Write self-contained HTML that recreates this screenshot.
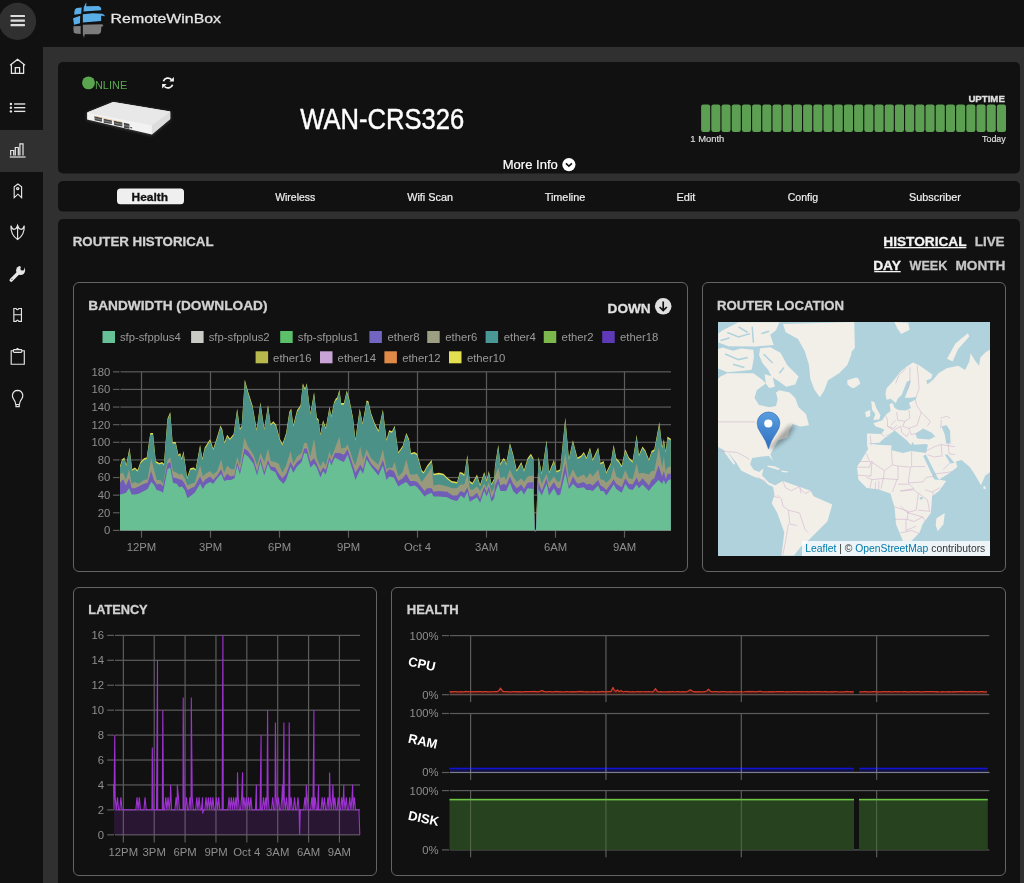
<!DOCTYPE html>
<html><head><meta charset="utf-8"><title>RemoteWinBox</title>
<style>html,body{margin:0;padding:0;background:#2f3030;width:1024px;height:883px;overflow:hidden;font-family:"Liberation Sans",sans-serif}svg{display:block;will-change:transform}</style>
</head><body>
<svg width="1024" height="883" viewBox="0 0 1024 883" font-family="'Liberation Sans', sans-serif"><rect x="0" y="0" width="1024" height="883" fill="#303030"/>
<rect x="0" y="0" width="1024" height="47" fill="#111111"/>
<rect x="0" y="47" width="43" height="836" fill="#111111"/>
<rect x="0" y="130" width="43" height="42" fill="#303030"/>
<circle cx="17.5" cy="21.4" r="18.6" fill="#303030"/>
<rect x="10.5" y="15" width="14.5" height="2.1" rx="0.6" fill="#dcdcdc"/>
<rect x="10.5" y="19.6" width="14.5" height="2.1" rx="0.6" fill="#dcdcdc"/>
<rect x="10.5" y="24.1" width="14.5" height="2.1" rx="0.6" fill="#dcdcdc"/>
<polygon points="74.28,14.74 74.4,11.5 75.2,9.3 76.6,8.1 81.65,7.61 81.17,13.79" fill="#5aaee8"/>
<polygon points="83.55,11.41 83.79,7.13 85.69,3.33 86.4,2.62 86.17,6.18 98.53,5.94 100.4,6.9 101.15,8.56 101.15,10.22" fill="#5aaee8"/>
<polygon points="73.09,18.31 80.22,15.69 79.99,23.3 74.04,24.73" fill="#5aaee8"/>
<polygon points="82.84,14.27 92.82,13.31 102.33,13.79 104.71,15.22 104.24,16.41 102.81,15.69 101.15,15.69 101.15,20.92 82.84,22.59" fill="#5aaee8"/>
<polygon points="73.33,26.15 80.7,25.92 80.7,34 75.23,33.52 73.8,32.3 73.57,30.91" fill="#7c7c7c"/>
<polygon points="82.84,24.73 102.33,24.25 103.52,25.92 101.39,26.63 100.91,32.33 99.8,33.6 98.53,34.24 84.74,34.24 84.03,38.04 82.84,34.24" fill="#7c7c7c"/>
<text transform="translate(110.58,22.80) scale(1.2247,1)" font-size="13" font-weight="normal" fill="#e6e6e6" stroke="#e6e6e6" stroke-width="0.25" >RemoteWinBox</text>
<g fill="none" stroke="#e6e6e6" stroke-width="1.25"><path d="M10.1 65.2 L17.58 59.2 L25 65.2 M11.4 64.2 V73.4 H23.6 V64.2 M15.3 73.4 V67.6 H19.6 V73.4"/></g>
<g fill="#e6e6e6"><circle cx="10.9" cy="104.0" r="1.2"/><circle cx="10.9" cy="107.7" r="1.2"/><circle cx="10.9" cy="111.4" r="1.2"/><rect x="14.1" y="103.3" width="11.2" height="1.35"/><rect x="14.1" y="107.0" width="11.2" height="1.35"/><rect x="14.1" y="110.7" width="11.2" height="1.35"/></g>
<g fill="none" stroke="#e6e6e6" stroke-width="1.2"><path d="M10.7 155.5 V150.5 H13.7 V155.5 M15.3 155.5 V147.5 H18.3 V155.5 M19.9 155.5 V143.8 H23 V155.5"/><path d="M9.8 157 H25.6"/></g>
<g fill="none" stroke="#e6e6e6" stroke-width="1.15"><path d="M14.2 197.6 V186.8 L17.9 184 L21.6 186.8 V197.6 L17.9 194.2 Z"/><ellipse cx="17.7" cy="188.6" rx="1.2" ry="1.0"/></g>
<g fill="none" stroke="#e6e6e6" stroke-width="1.15"><path d="M10.9 225.8 Q12.3 229.6 14.2 229.3 Q16.6 228.9 17.6 225.5 Q18.6 228.9 21 229.3 Q22.9 229.6 24.3 225.8 Q24.6 235 17.6 239.6 Q10.6 235 10.9 225.8 Z M17.6 225.5 V239.6"/></g>
<g><circle cx="20.6" cy="270.5" r="4.5" fill="#e6e6e6"/><line x1="20" y1="271.2" x2="11.2" y2="280.1" stroke="#e6e6e6" stroke-width="3.4" stroke-linecap="round"/><circle cx="22.3" cy="268.7" r="1.9" fill="#111111"/><rect x="21.4" y="263.6" width="3.6" height="5" fill="#111111" transform="rotate(45 23.2 266.1)"/><circle cx="11.9" cy="279.4" r="0.55" fill="#555"/></g>
<g fill="none" stroke="#e6e6e6" stroke-width="1.15"><path d="M13.85 308.5 H16.1 Q17.46 311 18.8 308.5 H21.45 V321.4 H18.8 Q17.46 318.9 16.1 321.4 H13.85 Z M13.85 314.7 H21.45"/></g>
<g fill="none" stroke="#e6e6e6" stroke-width="1.15"><path d="M13.3 350.7 H11.2 V364.2 H24.3 V350.7 H21.8"/><rect x="13.4" y="349.6" width="8.4" height="2.7" rx="0.9"/><path d="M16.3 349.5 L17.55 348.4 L18.8 349.5"/></g>
<g fill="none" stroke="#e6e6e6" stroke-width="1.2"><path d="M15.8 404.5 Q15.6 401.5 13.5 398.8 Q12 396.5 12.5 394.5 Q13.5 390.5 17.6 390.3 Q21.7 390.5 22.7 394.5 Q23.2 396.5 21.7 398.8 Q19.6 401.5 19.4 404.5 Z M16 404.5 V406.6 H19.2 V404.5"/></g>
<rect x="58" y="62" width="962" height="111.5" rx="5" fill="#111111"/>
<circle cx="88.5" cy="82.9" r="6.45" fill="#5aa64f"/>
<text transform="translate(94.97,89.00) scale(1.0333,1)" font-size="10.6" font-weight="normal" fill="#5aa64f" stroke="#5aa64f" stroke-width="0.0" >NLINE</text>
<g fill="none" stroke="#f6f6f6" stroke-width="1.75"><path d="M163.4 81.3 A4.9 4.9 0 0 1 171.46 79.54"/><path d="M172.6 84.7 A4.9 4.9 0 0 1 164.5 86.5"/></g>
<polygon points="173.9,77.1 173.9,81.6 169.3,81.6" fill="#f6f6f6"/><polygon points="162.1,84.0 162.1,88.6 166.6,84.0" fill="#f6f6f6"/>
<g>
<polygon points="86.6,112.3 113.2,101.6 170.6,111.2 170.6,119.4 151.8,135 86.6,119.8" fill="#ffffff" opacity="0.18" transform="translate(0,0.5)" filter="url(#glow)"/>
<polygon points="87.1,112.5 113.2,102 170.2,111.6 170.2,119 151.8,134.6 87.1,119.4" fill="#f2f2f2"/>
<polygon points="87.1,112.5 113.2,102 170.2,111.6 151.8,125.4" fill="#e8e8e8"/>
<polygon points="151.8,125.4 170.2,111.6 170.2,119 151.8,134.6" fill="#dcdcdc"/>
<g fill="#454545">
<polygon points="94.4,116.2 102,118.1 102,121.7 94.7,120.3"/>
<polygon points="103.7,118.7 111.9,120.6 111.9,124.1 103.7,122.8"/>
<polygon points="113.8,120.8 122.3,122.5 122.3,126.6 114.1,125"/>
<polygon points="123.9,122.8 129.4,124.1 129.4,128.8 123.9,127.7"/>
<polygon points="130.2,126.9 132.1,127.3 132.1,128.5 130.2,128.1"/>
</g>
<g stroke="#cfcfcf" stroke-width="0.45" fill="none">
<path d="M94.5 118.3 L102 119.9 M103.7 120.8 L111.9 122.4 M114 122.9 L122.3 124.6 M123.9 125.3 L129.4 126.5"/>
</g>
<g fill="#e8b060" opacity="0.8">
<polygon points="94.2,115.7 122.5,121.9 122.5,122.5 94.2,116.3"/>
</g>
</g>
<text transform="translate(300.20,129.30) scale(0.8827,1)" font-size="29" font-weight="normal" fill="#ffffff" stroke="#ffffff" stroke-width="0.45" >WAN-CRS326</text>
<text transform="translate(502.70,169.00) scale(1.0037,1)" font-size="13" font-weight="normal" fill="#ffffff" stroke="#ffffff" stroke-width="0.2" >More Info</text>
<circle cx="568.9" cy="164.6" r="6.6" fill="#ffffff"/><path d="M565.9 163.3 L568.9 166.2 L571.9 163.3" fill="none" stroke="#111" stroke-width="1.6"/>
<text transform="translate(968.40,101.70) scale(1.0167,1)" font-size="9.5" font-weight="bold" fill="#e0e0e0" stroke="#e0e0e0" stroke-width="0.3" >UPTIME</text>
<rect x="701.10" y="104.4" width="9.1" height="27.6" rx="2.2" fill="#5c9e52"/>
<rect x="711.30" y="104.4" width="9.1" height="27.6" rx="2.2" fill="#5c9e52"/>
<rect x="721.50" y="104.4" width="9.1" height="27.6" rx="2.2" fill="#5c9e52"/>
<rect x="731.70" y="104.4" width="9.1" height="27.6" rx="2.2" fill="#5c9e52"/>
<rect x="741.90" y="104.4" width="9.1" height="27.6" rx="2.2" fill="#5c9e52"/>
<rect x="752.10" y="104.4" width="9.1" height="27.6" rx="2.2" fill="#5c9e52"/>
<rect x="762.30" y="104.4" width="9.1" height="27.6" rx="2.2" fill="#5c9e52"/>
<rect x="772.50" y="104.4" width="9.1" height="27.6" rx="2.2" fill="#5c9e52"/>
<rect x="782.70" y="104.4" width="9.1" height="27.6" rx="2.2" fill="#5c9e52"/>
<rect x="792.90" y="104.4" width="9.1" height="27.6" rx="2.2" fill="#5c9e52"/>
<rect x="803.10" y="104.4" width="9.1" height="27.6" rx="2.2" fill="#5c9e52"/>
<rect x="813.30" y="104.4" width="9.1" height="27.6" rx="2.2" fill="#5c9e52"/>
<rect x="823.50" y="104.4" width="9.1" height="27.6" rx="2.2" fill="#5c9e52"/>
<rect x="833.70" y="104.4" width="9.1" height="27.6" rx="2.2" fill="#5c9e52"/>
<rect x="843.90" y="104.4" width="9.1" height="27.6" rx="2.2" fill="#5c9e52"/>
<rect x="854.10" y="104.4" width="9.1" height="27.6" rx="2.2" fill="#5c9e52"/>
<rect x="864.30" y="104.4" width="9.1" height="27.6" rx="2.2" fill="#5c9e52"/>
<rect x="874.50" y="104.4" width="9.1" height="27.6" rx="2.2" fill="#5c9e52"/>
<rect x="884.70" y="104.4" width="9.1" height="27.6" rx="2.2" fill="#5c9e52"/>
<rect x="894.90" y="104.4" width="9.1" height="27.6" rx="2.2" fill="#5c9e52"/>
<rect x="905.10" y="104.4" width="9.1" height="27.6" rx="2.2" fill="#5c9e52"/>
<rect x="915.30" y="104.4" width="9.1" height="27.6" rx="2.2" fill="#5c9e52"/>
<rect x="925.50" y="104.4" width="9.1" height="27.6" rx="2.2" fill="#5c9e52"/>
<rect x="935.70" y="104.4" width="9.1" height="27.6" rx="2.2" fill="#5c9e52"/>
<rect x="945.90" y="104.4" width="9.1" height="27.6" rx="2.2" fill="#5c9e52"/>
<rect x="956.10" y="104.4" width="9.1" height="27.6" rx="2.2" fill="#5c9e52"/>
<rect x="966.30" y="104.4" width="9.1" height="27.6" rx="2.2" fill="#5c9e52"/>
<rect x="976.50" y="104.4" width="9.1" height="27.6" rx="2.2" fill="#5c9e52"/>
<rect x="986.70" y="104.4" width="9.1" height="27.6" rx="2.2" fill="#5c9e52"/>
<rect x="996.90" y="104.4" width="9.1" height="27.6" rx="2.2" fill="#5c9e52"/>
<text transform="translate(690.31,142.20) scale(0.9909,1)" font-size="9.5" font-weight="normal" fill="#dddddd" stroke="#dddddd" stroke-width="0.2" >1 Month</text>
<text transform="translate(982.00,142.20) scale(0.9400,1)" font-size="9.5" font-weight="normal" fill="#dddddd" stroke="#dddddd" stroke-width="0.2" >Today</text>
<rect x="58" y="181" width="962" height="30.6" rx="5" fill="#111111"/>
<rect x="117" y="188.5" width="67" height="15.8" rx="3.5" fill="#efefef"/>
<text transform="translate(131.56,200.70) scale(1.0412,1)" font-size="11.5" font-weight="bold" fill="#111111" stroke="#111111" stroke-width="0.3" >Health</text>
<text transform="translate(275.20,200.70) scale(0.9091,1)" font-size="11.5" font-weight="normal" fill="#f0f0f0" stroke="#f0f0f0" stroke-width="0.2" >Wireless</text>
<text transform="translate(407.20,200.70) scale(0.9438,1)" font-size="11.5" font-weight="normal" fill="#f0f0f0" stroke="#f0f0f0" stroke-width="0.2" >Wifi Scan</text>
<text transform="translate(544.70,200.70) scale(0.9442,1)" font-size="11.5" font-weight="normal" fill="#f0f0f0" stroke="#f0f0f0" stroke-width="0.2" >Timeline</text>
<text transform="translate(676.55,200.70) scale(0.9526,1)" font-size="11.5" font-weight="normal" fill="#f0f0f0" stroke="#f0f0f0" stroke-width="0.2" >Edit</text>
<text transform="translate(787.75,200.70) scale(0.9167,1)" font-size="11.5" font-weight="normal" fill="#f0f0f0" stroke="#f0f0f0" stroke-width="0.2" >Config</text>
<text transform="translate(909.06,200.70) scale(0.9444,1)" font-size="11.5" font-weight="normal" fill="#f0f0f0" stroke="#f0f0f0" stroke-width="0.2" >Subscriber</text>
<rect x="58" y="219" width="962" height="700" rx="5" fill="#111111"/>
<text transform="translate(72.71,245.70) scale(0.9866,1)" font-size="13.5" font-weight="bold" fill="#d2d2d2" stroke="#d2d2d2" stroke-width="0.3" >ROUTER HISTORICAL</text>
<text transform="translate(883.29,245.50) scale(1.0123,1)" font-size="13.5" font-weight="bold" fill="#f4f4f4" stroke="#f4f4f4" stroke-width="0.3" >HISTORICAL</text>
<text transform="translate(974.70,245.50) scale(0.9966,1)" font-size="13.5" font-weight="bold" fill="#c8c8c8" stroke="#c8c8c8" stroke-width="0.3" >LIVE</text>
<text transform="translate(873.18,269.90) scale(1.0192,1)" font-size="13.5" font-weight="bold" fill="#f4f4f4" stroke="#f4f4f4" stroke-width="0.3" >DAY</text>
<text transform="translate(909.60,269.90) scale(0.9300,1)" font-size="13.5" font-weight="bold" fill="#c8c8c8" stroke="#c8c8c8" stroke-width="0.3" >WEEK</text>
<text transform="translate(955.49,269.90) scale(1.0104,1)" font-size="13.5" font-weight="bold" fill="#c8c8c8" stroke="#c8c8c8" stroke-width="0.3" >MONTH</text>
<rect x="884.3" y="247" width="82" height="1.3" fill="#f4f4f4"/>
<rect x="874.2" y="271" width="26.5" height="1.3" fill="#f4f4f4"/>
<rect x="73.5" y="282.5" width="614" height="289" rx="5.5" fill="none" stroke="#646464" stroke-width="1"/>
<rect x="702.5" y="282.5" width="303" height="289" rx="5.5" fill="none" stroke="#646464" stroke-width="1"/>
<rect x="73.5" y="587.5" width="303" height="288" rx="5.5" fill="none" stroke="#646464" stroke-width="1"/>
<rect x="391.5" y="587.5" width="614" height="288" rx="5.5" fill="none" stroke="#646464" stroke-width="1"/>
<text transform="translate(88.29,310.00) scale(1.0131,1)" font-size="13.5" font-weight="bold" fill="#d2d2d2" stroke="#d2d2d2" stroke-width="0.3" >BANDWIDTH (DOWNLOAD)</text>
<text transform="translate(607.59,312.70) scale(1.0098,1)" font-size="13.5" font-weight="bold" fill="#e0e0e0" stroke="#e0e0e0" stroke-width="0.3" >DOWN</text>
<text transform="translate(717.02,309.60) scale(0.9767,1)" font-size="13.5" font-weight="bold" fill="#d2d2d2" stroke="#d2d2d2" stroke-width="0.3" >ROUTER LOCATION</text>
<text transform="translate(88.35,614.30) scale(0.9452,1)" font-size="13.5" font-weight="bold" fill="#d2d2d2" stroke="#d2d2d2" stroke-width="0.3" >LATENCY</text>
<text transform="translate(406.73,614.30) scale(0.9673,1)" font-size="13.5" font-weight="bold" fill="#d2d2d2" stroke="#d2d2d2" stroke-width="0.3" >HEALTH</text>
<circle cx="663.2" cy="306.3" r="8.3" fill="#e0e0e0"/><path d="M663.2 301.5 V310.5 M659.6 307 L663.2 310.6 L666.8 307" fill="none" stroke="#111" stroke-width="1.7"/>
<rect x="102.5" y="331" width="12.5" height="12" fill="#66c296"/>
<text x="119.9" y="341.3" font-size="11.3" fill="#9a9a9a" text-anchor="start" font-weight="normal" >sfp-sfpplus4</text>
<rect x="191.1" y="331" width="12.5" height="12" fill="#c9cbc4"/>
<text x="208.7" y="341.3" font-size="11.3" fill="#9a9a9a" text-anchor="start" font-weight="normal" >sfp-sfpplus2</text>
<rect x="280.2" y="331" width="12.5" height="12" fill="#5cbf6a"/>
<text x="297.8" y="341.3" font-size="11.3" fill="#9a9a9a" text-anchor="start" font-weight="normal" >sfp-sfpplus1</text>
<rect x="369.4" y="331" width="12.5" height="12" fill="#7265c1"/>
<text x="387.5" y="341.3" font-size="11.3" fill="#9a9a9a" text-anchor="start" font-weight="normal" >ether8</text>
<rect x="427.2" y="331" width="12.5" height="12" fill="#9d9f82"/>
<text x="445.3" y="341.3" font-size="11.3" fill="#9a9a9a" text-anchor="start" font-weight="normal" >ether6</text>
<rect x="485.6" y="331" width="12.5" height="12" fill="#4a9895"/>
<text x="503.75" y="341.3" font-size="11.3" fill="#9a9a9a" text-anchor="start" font-weight="normal" >ether4</text>
<rect x="543.75" y="331" width="12.5" height="12" fill="#7cb84c"/>
<text x="561.6" y="341.3" font-size="11.3" fill="#9a9a9a" text-anchor="start" font-weight="normal" >ether2</text>
<rect x="602.2" y="331" width="12.5" height="12" fill="#5e3ab8"/>
<text x="620" y="341.3" font-size="11.3" fill="#9a9a9a" text-anchor="start" font-weight="normal" >ether18</text>
<rect x="255.6" y="351.3" width="12.5" height="12" fill="#b8b94c"/>
<text x="273.1" y="361.6" font-size="11.3" fill="#9a9a9a" text-anchor="start" font-weight="normal" >ether16</text>
<rect x="320" y="351.3" width="12.5" height="12" fill="#c9a3d6"/>
<text x="337.6" y="361.6" font-size="11.3" fill="#9a9a9a" text-anchor="start" font-weight="normal" >ether14</text>
<rect x="384.4" y="351.3" width="12.5" height="12" fill="#e08a48"/>
<text x="402.2" y="361.6" font-size="11.3" fill="#9a9a9a" text-anchor="start" font-weight="normal" >ether12</text>
<rect x="449" y="351.3" width="12.5" height="12" fill="#e2e050"/>
<text x="466.9" y="361.6" font-size="11.3" fill="#9a9a9a" text-anchor="start" font-weight="normal" >ether10</text>
<rect x="113" y="529.80" width="6.5" height="1.2" fill="#5c5c5c"/>
<rect x="120.5" y="529.80" width="550.5" height="1.2" fill="#5c5c5c"/>
<text x="110.3" y="534.3" font-size="11.3" fill="#8e8e8e" text-anchor="end" font-weight="normal" >0</text>
<rect x="113" y="512.18" width="6.5" height="1.2" fill="#5c5c5c"/>
<rect x="120.5" y="512.18" width="550.5" height="1.2" fill="#5c5c5c"/>
<text x="110.3" y="516.68" font-size="11.3" fill="#8e8e8e" text-anchor="end" font-weight="normal" >20</text>
<rect x="113" y="494.56" width="6.5" height="1.2" fill="#5c5c5c"/>
<rect x="120.5" y="494.56" width="550.5" height="1.2" fill="#5c5c5c"/>
<text x="110.3" y="499.05999999999995" font-size="11.3" fill="#8e8e8e" text-anchor="end" font-weight="normal" >40</text>
<rect x="113" y="476.94" width="6.5" height="1.2" fill="#5c5c5c"/>
<rect x="120.5" y="476.94" width="550.5" height="1.2" fill="#5c5c5c"/>
<text x="110.3" y="481.43999999999994" font-size="11.3" fill="#8e8e8e" text-anchor="end" font-weight="normal" >60</text>
<rect x="113" y="459.32" width="6.5" height="1.2" fill="#5c5c5c"/>
<rect x="120.5" y="459.32" width="550.5" height="1.2" fill="#5c5c5c"/>
<text x="110.3" y="463.81999999999994" font-size="11.3" fill="#8e8e8e" text-anchor="end" font-weight="normal" >80</text>
<rect x="113" y="441.70" width="6.5" height="1.2" fill="#5c5c5c"/>
<rect x="120.5" y="441.70" width="550.5" height="1.2" fill="#5c5c5c"/>
<text x="110.3" y="446.19999999999993" font-size="11.3" fill="#8e8e8e" text-anchor="end" font-weight="normal" >100</text>
<rect x="113" y="424.08" width="6.5" height="1.2" fill="#5c5c5c"/>
<rect x="120.5" y="424.08" width="550.5" height="1.2" fill="#5c5c5c"/>
<text x="110.3" y="428.5799999999999" font-size="11.3" fill="#8e8e8e" text-anchor="end" font-weight="normal" >120</text>
<rect x="113" y="406.46" width="6.5" height="1.2" fill="#5c5c5c"/>
<rect x="120.5" y="406.46" width="550.5" height="1.2" fill="#5c5c5c"/>
<text x="110.3" y="410.9599999999999" font-size="11.3" fill="#8e8e8e" text-anchor="end" font-weight="normal" >140</text>
<rect x="113" y="388.84" width="6.5" height="1.2" fill="#5c5c5c"/>
<rect x="120.5" y="388.84" width="550.5" height="1.2" fill="#5c5c5c"/>
<text x="110.3" y="393.3399999999999" font-size="11.3" fill="#8e8e8e" text-anchor="end" font-weight="normal" >160</text>
<rect x="113" y="371.22" width="6.5" height="1.2" fill="#5c5c5c"/>
<rect x="120.5" y="371.22" width="550.5" height="1.2" fill="#5c5c5c"/>
<text x="110.3" y="375.7199999999999" font-size="11.3" fill="#8e8e8e" text-anchor="end" font-weight="normal" >180</text>
<rect x="140.90" y="371.7" width="1.2" height="166" fill="#5c5c5c"/>
<text x="141.5" y="550.8" font-size="11.3" fill="#8e8e8e" text-anchor="middle" font-weight="normal" >12PM</text>
<rect x="209.90" y="371.7" width="1.2" height="166" fill="#5c5c5c"/>
<text x="210.5" y="550.8" font-size="11.3" fill="#8e8e8e" text-anchor="middle" font-weight="normal" >3PM</text>
<rect x="278.90" y="371.7" width="1.2" height="166" fill="#5c5c5c"/>
<text x="279.5" y="550.8" font-size="11.3" fill="#8e8e8e" text-anchor="middle" font-weight="normal" >6PM</text>
<rect x="347.90" y="371.7" width="1.2" height="166" fill="#5c5c5c"/>
<text x="348.5" y="550.8" font-size="11.3" fill="#8e8e8e" text-anchor="middle" font-weight="normal" >9PM</text>
<rect x="416.90" y="371.7" width="1.2" height="166" fill="#5c5c5c"/>
<text x="417.5" y="550.8" font-size="11.3" fill="#8e8e8e" text-anchor="middle" font-weight="normal" >Oct 4</text>
<rect x="485.90" y="371.7" width="1.2" height="166" fill="#5c5c5c"/>
<text x="486.5" y="550.8" font-size="11.3" fill="#8e8e8e" text-anchor="middle" font-weight="normal" >3AM</text>
<rect x="554.90" y="371.7" width="1.2" height="166" fill="#5c5c5c"/>
<text x="555.5" y="550.8" font-size="11.3" fill="#8e8e8e" text-anchor="middle" font-weight="normal" >6AM</text>
<rect x="623.90" y="371.7" width="1.2" height="166" fill="#5c5c5c"/>
<text x="624.5" y="550.8" font-size="11.3" fill="#8e8e8e" text-anchor="middle" font-weight="normal" >9AM</text>
<path d="M120.0 530.3 L120.0 465.6 L120.1 465.6 L122.2 459.2 L124.4 457.4 L126.2 464.7 L129.5 447.5 L132.2 469.2 L134.9 467.4 L137.6 470.1 L140.4 462.0 L144.0 458.3 L146.7 457.4 L150.3 433.0 L153.0 433.0 L155.8 461.1 L159.4 462.9 L162.1 462.0 L163.9 463.8 L167.5 418.5 L170.3 412.1 L172.6 442.0 L175.7 442.0 L178.4 454.7 L180.2 452.9 L181.7 458.3 L183.5 451.1 L187.1 477.4 L190.2 468.3 L193.8 467.4 L195.6 469.2 L200.1 444.7 L202.3 458.3 L204.7 447.5 L210.0 439.3 L213.3 448.4 L217.2 436.6 L220.5 425.4 L222.3 429.3 L224.5 442.0 L227.2 434.8 L229.9 438.4 L233.6 433.9 L237.2 408.5 L239.9 428.4 L241.7 425.7 L244.8 379.5 L248.0 391.3 L252.6 405.8 L256.7 429.3 L260.4 402.2 L264.3 428.4 L268.0 404.9 L270.7 423.9 L273.4 421.2 L276.1 424.8 L279.7 438.4 L282.5 443.8 L286.1 433.0 L289.3 412.1 L291.2 408.5 L293.3 424.8 L297.0 410.3 L300.6 404.9 L302.8 383.2 L305.1 388.6 L306.8 383.2 L310.4 413.0 L314.1 392.2 L316.8 417.6 L318.6 419.4 L320.4 433.9 L323.1 420.3 L325.8 427.5 L329.5 406.7 L331.3 415.8 L334.0 402.2 L335.8 398.6 L337.2 397.6 L339.4 389.5 L341.2 403.1 L343.9 403.1 L346.7 390.4 L349.4 399.5 L353.0 417.6 L355.4 439.3 L359.7 408.5 L362.6 423.0 L366.6 400.4 L368.4 401.3 L371.1 413.0 L374.7 423.0 L378.4 430.3 L382.9 409.4 L386.5 439.3 L389.2 430.3 L392.0 431.2 L394.7 425.7 L398.3 452.0 L402.7 445.7 L406.3 433.0 L409.1 439.3 L410.9 452.9 L414.5 452.0 L417.2 453.8 L421.7 470.1 L423.6 471.9 L427.2 465.6 L431.7 460.1 L433.5 473.7 L438.9 472.8 L443.5 473.7 L447.1 477.4 L451.6 481.0 L457.1 481.9 L459.8 471.9 L462.5 472.8 L464.3 474.6 L467.4 454.7 L469.7 481.0 L472.5 482.8 L477.0 474.6 L480.1 484.6 L484.2 471.9 L486.6 480.1 L488.8 471.0 L491.5 483.7 L494.2 478.3 L495.0 465.6 L498.3 444.7 L500.4 463.8 L503.2 458.3 L505.0 459.2 L506.2 463.8 L509.9 442.9 L513.1 453.8 L516.7 470.1 L521.3 462.0 L524.0 470.1 L527.6 458.3 L530.9 453.8 L533.4 458.3 L534.5 529.9 L535.9 529.9 L538.5 456.5 L541.7 472.8 L546.6 440.2 L549.0 471.9 L553.9 460.1 L556.6 471.0 L560.2 469.2 L565.3 417.6 L568.9 458.3 L572.9 440.2 L577.4 457.4 L581.1 455.6 L583.8 452.0 L586.5 457.4 L590.0 447.5 L592.7 459.2 L598.2 447.5 L600.5 462.9 L603.6 461.1 L606.3 471.9 L610.8 462.9 L613.6 444.7 L616.3 458.3 L619.0 461.1 L621.7 465.6 L625.3 449.3 L628.9 457.4 L632.6 461.1 L636.7 434.8 L638.9 454.7 L642.5 446.6 L645.3 450.2 L648.9 459.2 L651.6 451.1 L654.3 449.3 L659.4 422.1 L662.1 446.6 L663.9 439.3 L665.7 451.1 L667.5 436.6 L670.1 438.4 L670.8 438.4 L670.8 530.3 Z" fill="#e2dc4e"/>
<path d="M120.0 530.3 L120.0 467.2 L120.1 467.2 L122.2 460.8 L124.4 459.0 L126.2 466.3 L129.5 449.1 L132.2 470.8 L134.9 469.0 L137.6 471.7 L140.4 463.6 L144.0 459.9 L146.7 459.0 L150.3 434.6 L153.0 434.6 L155.8 462.7 L159.4 464.5 L162.1 463.6 L163.9 465.4 L167.5 420.1 L170.3 413.7 L172.6 443.6 L175.7 443.6 L178.4 456.3 L180.2 454.5 L181.7 459.9 L183.5 452.7 L187.1 479.0 L190.2 469.9 L193.8 469.0 L195.6 470.8 L200.1 446.3 L202.3 459.9 L204.7 449.1 L210.0 440.9 L213.3 450.0 L217.2 438.2 L220.5 427.0 L222.3 430.9 L224.5 443.6 L227.2 436.4 L229.9 440.0 L233.6 435.5 L237.2 410.1 L239.9 430.0 L241.7 427.3 L244.8 381.1 L248.0 392.9 L252.6 407.4 L256.7 430.9 L260.4 403.8 L264.3 430.0 L268.0 406.5 L270.7 425.5 L273.4 422.8 L276.1 426.4 L279.7 440.0 L282.5 445.4 L286.1 434.6 L289.3 413.7 L291.2 410.1 L293.3 426.4 L297.0 411.9 L300.6 406.5 L302.8 384.8 L305.1 390.2 L306.8 384.8 L310.4 414.6 L314.1 393.8 L316.8 419.2 L318.6 421.0 L320.4 435.5 L323.1 421.9 L325.8 429.1 L329.5 408.3 L331.3 417.4 L334.0 403.8 L335.8 400.2 L337.2 399.2 L339.4 391.1 L341.2 404.7 L343.9 404.7 L346.7 392.0 L349.4 401.1 L353.0 419.2 L355.4 440.9 L359.7 410.1 L362.6 424.6 L366.6 402.0 L368.4 402.9 L371.1 414.6 L374.7 424.6 L378.4 431.9 L382.9 411.0 L386.5 440.9 L389.2 431.9 L392.0 432.8 L394.7 427.3 L398.3 453.6 L402.7 447.3 L406.3 434.6 L409.1 440.9 L410.9 454.5 L414.5 453.6 L417.2 455.4 L421.7 471.7 L423.6 473.5 L427.2 467.2 L431.7 461.7 L433.5 475.3 L438.9 474.4 L443.5 475.3 L447.1 479.0 L451.6 482.6 L457.1 483.5 L459.8 473.5 L462.5 474.4 L464.3 476.2 L467.4 456.3 L469.7 482.6 L472.5 484.4 L477.0 476.2 L480.1 486.2 L484.2 473.5 L486.6 481.7 L488.8 472.6 L491.5 485.3 L494.2 479.9 L495.0 467.2 L498.3 446.3 L500.4 465.4 L503.2 459.9 L505.0 460.8 L506.2 465.4 L509.9 444.5 L513.1 455.4 L516.7 471.7 L521.3 463.6 L524.0 471.7 L527.6 459.9 L530.9 455.4 L533.4 459.9 L534.5 531.5 L535.9 531.5 L538.5 458.1 L541.7 474.4 L546.6 441.8 L549.0 473.5 L553.9 461.7 L556.6 472.6 L560.2 470.8 L565.3 419.2 L568.9 459.9 L572.9 441.8 L577.4 459.0 L581.1 457.2 L583.8 453.6 L586.5 459.0 L590.0 449.1 L592.7 460.8 L598.2 449.1 L600.5 464.5 L603.6 462.7 L606.3 473.5 L610.8 464.5 L613.6 446.3 L616.3 459.9 L619.0 462.7 L621.7 467.2 L625.3 450.9 L628.9 459.0 L632.6 462.7 L636.7 436.4 L638.9 456.3 L642.5 448.2 L645.3 451.8 L648.9 460.8 L651.6 452.7 L654.3 450.9 L659.4 423.7 L662.1 448.2 L663.9 440.9 L665.7 452.7 L667.5 438.2 L670.1 440.0 L670.8 440.0 L670.8 530.3 Z" fill="#4b9188"/>
<path d="M120.0 530.3 L120.0 473.7 L120.1 473.7 L123.2 472.8 L125.9 480.1 L129.1 469.2 L131.7 483.7 L134.9 481.9 L138.6 483.7 L144.0 480.1 L147.6 479.2 L151.2 458.3 L153.9 469.2 L156.7 480.1 L160.3 480.1 L163.0 483.7 L167.5 460.1 L170.3 457.4 L173.0 471.0 L176.6 472.8 L179.3 474.6 L182.0 473.7 L184.7 478.3 L187.5 485.5 L191.1 483.7 L194.7 482.8 L200.1 465.6 L202.9 476.4 L205.6 473.7 L210.0 471.0 L213.3 474.6 L217.2 471.0 L221.2 459.2 L224.1 472.8 L227.2 465.6 L230.8 469.2 L234.5 469.2 L237.2 456.5 L239.9 465.6 L244.4 437.5 L248.0 446.6 L253.5 454.7 L257.1 465.6 L260.4 452.9 L264.3 462.0 L268.0 448.4 L270.7 461.1 L275.2 462.0 L278.8 463.8 L282.5 472.8 L286.1 465.6 L290.6 451.1 L293.3 463.8 L297.0 456.5 L301.5 452.9 L304.2 442.9 L306.8 442.9 L310.4 456.5 L314.1 438.4 L316.8 458.3 L320.4 466.5 L323.1 461.1 L325.8 465.6 L329.5 451.1 L331.3 457.4 L334.9 448.4 L339.4 436.6 L341.2 448.4 L345.8 447.5 L347.6 443.8 L353.0 460.1 L355.4 465.6 L360.3 446.6 L363.0 460.1 L366.6 449.3 L371.1 458.3 L378.4 464.7 L382.9 449.3 L386.5 469.2 L389.2 467.4 L392.0 468.3 L394.7 462.0 L398.3 476.4 L402.7 471.9 L406.3 459.2 L410.0 474.6 L414.5 474.6 L417.2 473.7 L421.7 481.9 L427.2 474.6 L431.7 467.4 L433.5 485.5 L438.9 484.6 L443.5 485.5 L447.1 486.4 L452.5 488.2 L457.1 488.2 L460.7 484.6 L464.3 484.6 L467.4 473.7 L469.7 489.1 L472.5 490.0 L477.0 486.4 L480.1 490.9 L484.2 483.7 L486.6 488.2 L488.8 481.9 L491.5 492.8 L494.2 487.3 L495.0 476.4 L498.3 467.4 L500.4 478.3 L504.1 476.4 L506.2 480.1 L509.9 469.2 L513.1 476.4 L516.7 481.9 L521.3 478.3 L524.0 481.9 L527.6 476.4 L533.4 475.5 L534.5 529.9 L535.9 529.9 L538.5 472.8 L541.7 483.7 L546.6 473.7 L549.0 482.8 L553.9 476.4 L557.5 481.9 L560.2 481.0 L565.3 452.9 L568.9 478.3 L572.9 469.2 L577.4 477.4 L583.8 474.6 L586.5 478.3 L590.0 472.8 L592.7 476.4 L598.2 469.2 L600.5 479.2 L603.6 480.1 L606.3 482.8 L610.8 478.3 L613.6 466.5 L616.3 476.4 L621.7 479.2 L625.3 470.1 L628.9 478.3 L632.6 479.2 L636.7 463.8 L638.9 473.7 L642.5 472.8 L648.9 474.6 L651.6 471.0 L654.3 471.0 L658.8 447.5 L662.1 467.4 L663.9 456.5 L665.7 471.0 L667.5 467.4 L670.1 466.5 L670.8 466.5 L670.8 530.3 Z" fill="#999a7c"/>
<path d="M120.0 530.3 L120.0 482.8 L120.1 482.8 L123.2 479.2 L125.9 485.5 L129.1 478.3 L131.7 488.2 L134.9 488.2 L138.6 486.4 L144.0 483.7 L147.6 482.8 L151.2 471.0 L153.9 480.1 L156.7 484.6 L160.3 483.7 L163.0 486.4 L167.5 463.8 L170.3 462.0 L173.0 477.4 L176.6 478.3 L179.3 479.2 L182.0 480.1 L184.7 483.7 L187.5 490.0 L191.1 488.2 L194.7 486.4 L200.1 476.4 L202.9 482.8 L205.6 479.2 L210.0 476.4 L213.3 480.1 L217.2 475.5 L221.2 469.2 L224.1 478.3 L227.2 473.7 L230.8 476.4 L234.5 475.5 L237.2 462.0 L239.9 471.0 L244.4 448.4 L248.0 451.1 L253.5 459.2 L257.1 471.9 L260.4 458.3 L264.3 471.9 L268.0 460.1 L270.7 466.5 L275.2 467.4 L278.8 473.7 L282.5 478.3 L286.1 473.7 L290.6 462.0 L293.3 467.4 L297.0 462.0 L301.5 458.3 L304.2 448.4 L306.8 448.4 L310.4 462.0 L314.1 458.3 L316.8 463.8 L320.4 472.8 L323.1 467.4 L325.8 470.1 L329.5 456.5 L331.3 462.0 L334.9 452.9 L339.4 452.9 L343.9 454.7 L347.6 449.3 L353.0 465.6 L355.4 472.8 L360.3 464.7 L363.0 469.2 L366.6 454.7 L371.1 463.8 L378.4 471.0 L382.9 460.1 L386.5 472.8 L389.2 469.2 L393.8 471.0 L398.3 481.0 L402.7 478.3 L406.3 473.7 L410.0 481.0 L414.5 481.0 L417.2 481.9 L421.7 487.3 L424.5 490.9 L427.2 488.2 L431.7 488.2 L433.5 491.8 L438.9 490.9 L447.1 491.8 L452.5 495.5 L457.1 495.5 L460.7 490.9 L464.3 492.8 L467.4 487.3 L469.7 496.4 L472.5 496.4 L477.0 492.8 L480.1 499.1 L484.2 486.4 L486.6 492.8 L488.8 486.4 L491.5 498.2 L494.2 492.8 L495.0 485.5 L498.3 478.3 L500.4 485.5 L504.1 483.7 L506.2 485.5 L509.9 476.4 L513.1 483.7 L516.7 488.2 L521.3 484.6 L524.0 489.1 L527.6 482.8 L533.4 481.9 L534.5 529.9 L535.9 529.9 L538.5 481.9 L541.7 490.9 L546.6 478.3 L549.0 489.1 L553.9 481.9 L557.5 488.2 L560.2 488.2 L565.3 463.8 L568.9 486.4 L572.9 476.4 L577.4 483.7 L583.8 481.9 L586.5 484.6 L590.0 483.7 L592.7 485.5 L598.2 480.1 L600.5 485.5 L603.6 487.3 L606.3 490.0 L610.8 483.7 L613.6 479.2 L616.3 483.7 L621.7 487.3 L625.3 478.3 L628.9 483.7 L632.6 484.6 L636.7 477.4 L638.9 482.8 L642.5 478.3 L648.9 485.5 L651.6 480.1 L654.3 478.3 L658.5 465.6 L662.1 476.4 L663.9 471.0 L665.7 479.2 L667.5 473.7 L670.1 473.7 L670.8 473.7 L670.8 530.3 Z" fill="#6f5db8"/>
<path d="M120.0 530.3 L120.0 494.6 L120.1 494.6 L123.2 493.7 L125.9 492.8 L129.1 488.2 L131.7 494.6 L134.9 494.6 L138.6 493.7 L144.0 490.9 L147.6 489.1 L151.2 481.9 L153.9 484.6 L156.7 490.0 L160.3 490.9 L163.0 492.8 L167.5 469.2 L170.3 467.4 L173.0 482.8 L176.6 483.7 L179.3 487.3 L182.0 486.4 L184.7 490.0 L187.5 498.2 L191.1 495.5 L194.7 492.8 L200.1 483.7 L202.9 489.1 L205.6 484.6 L210.0 481.9 L213.3 483.7 L217.2 478.3 L221.2 473.7 L224.1 481.0 L227.2 480.1 L230.8 480.1 L234.5 478.3 L237.2 465.6 L239.9 474.6 L244.4 453.8 L248.0 456.5 L253.5 463.8 L257.1 475.5 L260.4 462.0 L264.3 475.5 L268.0 463.8 L270.7 470.1 L275.2 471.9 L278.8 479.2 L283.4 483.7 L286.1 480.1 L290.6 466.5 L293.3 472.8 L297.0 466.5 L301.5 462.0 L304.2 452.9 L306.8 453.8 L310.4 467.4 L314.1 463.8 L316.8 467.4 L320.4 477.4 L323.1 471.0 L325.8 474.6 L329.5 460.1 L331.3 465.6 L334.9 457.4 L339.4 460.1 L343.9 462.0 L347.6 454.7 L353.0 471.0 L355.4 480.1 L360.3 469.2 L363.0 473.7 L366.6 459.2 L371.1 466.5 L378.4 475.5 L382.9 465.6 L386.5 480.1 L389.2 476.4 L393.8 477.4 L398.3 486.4 L402.7 483.7 L406.3 481.9 L410.0 486.4 L414.5 485.5 L417.2 487.3 L421.7 492.8 L424.5 496.4 L427.2 494.6 L431.7 492.8 L433.5 496.4 L438.9 496.4 L447.1 497.3 L452.5 500.0 L457.1 500.9 L460.7 495.5 L464.3 498.2 L467.4 491.8 L469.7 501.8 L472.5 500.0 L477.0 497.3 L480.1 502.7 L484.2 490.9 L486.6 496.4 L488.8 490.9 L491.5 501.8 L494.2 498.2 L495.0 492.8 L498.3 483.7 L500.4 490.9 L504.1 490.9 L506.2 490.9 L509.9 482.8 L513.1 490.9 L516.7 494.6 L521.3 490.0 L524.0 494.6 L527.6 488.2 L533.4 489.1 L534.5 529.9 L535.9 529.9 L538.5 489.1 L541.7 495.5 L546.6 483.7 L549.0 495.5 L553.9 488.2 L557.5 495.5 L560.2 494.6 L565.3 472.8 L568.9 489.1 L572.9 483.7 L577.4 488.2 L583.8 487.3 L586.5 490.0 L590.0 490.0 L592.7 490.9 L598.2 485.5 L600.5 490.9 L603.6 490.9 L606.3 495.5 L610.8 489.1 L613.6 484.6 L616.3 489.1 L621.7 492.8 L625.3 483.7 L628.9 489.1 L632.6 490.0 L636.7 484.6 L638.9 488.2 L642.5 484.6 L648.9 490.9 L651.6 487.3 L654.3 484.6 L658.5 480.1 L662.1 483.7 L663.9 480.1 L665.7 484.6 L667.5 481.0 L670.1 479.2 L670.8 479.2 L670.8 530.3 Z" fill="#67bf93"/>
<rect x="107.2" y="834.20" width="6.8" height="1.2" fill="#5c5c5c"/>
<rect x="115" y="834.20" width="245" height="1.2" fill="#5c5c5c"/>
<text x="104" y="838.7" font-size="11.3" fill="#8e8e8e" text-anchor="end" font-weight="normal" >0</text>
<rect x="107.2" y="809.28" width="6.8" height="1.2" fill="#5c5c5c"/>
<rect x="115" y="809.28" width="245" height="1.2" fill="#5c5c5c"/>
<text x="104" y="813.7750000000001" font-size="11.3" fill="#8e8e8e" text-anchor="end" font-weight="normal" >2</text>
<rect x="107.2" y="784.35" width="6.8" height="1.2" fill="#5c5c5c"/>
<rect x="115" y="784.35" width="245" height="1.2" fill="#5c5c5c"/>
<text x="104" y="788.85" font-size="11.3" fill="#8e8e8e" text-anchor="end" font-weight="normal" >4</text>
<rect x="107.2" y="759.42" width="6.8" height="1.2" fill="#5c5c5c"/>
<rect x="115" y="759.42" width="245" height="1.2" fill="#5c5c5c"/>
<text x="104" y="763.925" font-size="11.3" fill="#8e8e8e" text-anchor="end" font-weight="normal" >6</text>
<rect x="107.2" y="734.50" width="6.8" height="1.2" fill="#5c5c5c"/>
<rect x="115" y="734.50" width="245" height="1.2" fill="#5c5c5c"/>
<text x="104" y="739.0" font-size="11.3" fill="#8e8e8e" text-anchor="end" font-weight="normal" >8</text>
<rect x="107.2" y="709.58" width="6.8" height="1.2" fill="#5c5c5c"/>
<rect x="115" y="709.58" width="245" height="1.2" fill="#5c5c5c"/>
<text x="104" y="714.075" font-size="11.3" fill="#8e8e8e" text-anchor="end" font-weight="normal" >10</text>
<rect x="107.2" y="684.65" width="6.8" height="1.2" fill="#5c5c5c"/>
<rect x="115" y="684.65" width="245" height="1.2" fill="#5c5c5c"/>
<text x="104" y="689.15" font-size="11.3" fill="#8e8e8e" text-anchor="end" font-weight="normal" >12</text>
<rect x="107.2" y="659.72" width="6.8" height="1.2" fill="#5c5c5c"/>
<rect x="115" y="659.72" width="245" height="1.2" fill="#5c5c5c"/>
<text x="104" y="664.2249999999999" font-size="11.3" fill="#8e8e8e" text-anchor="end" font-weight="normal" >14</text>
<rect x="107.2" y="634.80" width="6.8" height="1.2" fill="#5c5c5c"/>
<rect x="115" y="634.80" width="245" height="1.2" fill="#5c5c5c"/>
<text x="104" y="639.3" font-size="11.3" fill="#8e8e8e" text-anchor="end" font-weight="normal" >16</text>
<rect x="122.75" y="635.3" width="1.2" height="207.2" fill="#5c5c5c"/>
<text x="123.3" y="855.8" font-size="11.3" fill="#8e8e8e" text-anchor="middle" font-weight="normal" >12PM</text>
<rect x="153.62" y="635.3" width="1.2" height="207.2" fill="#5c5c5c"/>
<text x="154.2" y="855.8" font-size="11.3" fill="#8e8e8e" text-anchor="middle" font-weight="normal" >3PM</text>
<rect x="184.49" y="635.3" width="1.2" height="207.2" fill="#5c5c5c"/>
<text x="185.1" y="855.8" font-size="11.3" fill="#8e8e8e" text-anchor="middle" font-weight="normal" >6PM</text>
<rect x="215.36" y="635.3" width="1.2" height="207.2" fill="#5c5c5c"/>
<text x="216.0" y="855.8" font-size="11.3" fill="#8e8e8e" text-anchor="middle" font-weight="normal" >9PM</text>
<rect x="246.23" y="635.3" width="1.2" height="207.2" fill="#5c5c5c"/>
<text x="246.8" y="855.8" font-size="11.3" fill="#8e8e8e" text-anchor="middle" font-weight="normal" >Oct 4</text>
<rect x="277.10" y="635.3" width="1.2" height="207.2" fill="#5c5c5c"/>
<text x="277.7" y="855.8" font-size="11.3" fill="#8e8e8e" text-anchor="middle" font-weight="normal" >3AM</text>
<rect x="307.97" y="635.3" width="1.2" height="207.2" fill="#5c5c5c"/>
<text x="308.6" y="855.8" font-size="11.3" fill="#8e8e8e" text-anchor="middle" font-weight="normal" >6AM</text>
<rect x="338.84" y="635.3" width="1.2" height="207.2" fill="#5c5c5c"/>
<text x="339.4" y="855.8" font-size="11.3" fill="#8e8e8e" text-anchor="middle" font-weight="normal" >9AM</text>
<polygon points="114,834.7 113.80,784.85 113.60,784.85 114.00,809.78 114.75,735.00 115.15,797.31 116.30,809.78 117.45,797.31 118.60,809.78 119.75,809.78 120.90,797.31 122.05,809.78 123.20,809.78 124.35,809.78 125.50,809.78 126.65,809.78 127.80,809.78 128.95,809.78 130.10,809.78 131.25,809.78 132.40,809.78 133.55,809.78 134.70,809.78 135.85,809.78 137.00,797.31 138.15,809.78 139.30,797.31 140.45,809.78 141.60,809.78 142.75,809.78 143.90,809.78 145.05,797.31 146.20,809.78 147.35,809.78 148.50,809.78 149.65,809.78 150.80,809.78 151.95,809.78 152.30,747.46 153.10,809.78 154.25,809.78 155.40,809.78 156.55,809.78 157.50,660.22 157.70,809.78 158.85,809.78 160.00,809.78 161.15,809.78 162.30,809.78 162.80,710.08 163.45,809.78 164.60,809.78 165.75,797.31 166.90,809.78 168.05,797.31 169.20,809.78 170.35,797.31 170.60,784.85 171.50,809.78 172.65,809.78 173.80,809.78 174.95,809.78 176.10,797.31 177.25,809.78 177.30,784.85 178.40,797.31 179.55,809.78 180.70,809.78 181.85,809.78 183.00,809.78 183.20,697.61 184.15,809.78 185.30,809.78 186.45,797.31 187.60,809.78 188.75,809.78 189.90,797.31 191.05,809.78 191.30,697.61 192.20,797.31 193.35,809.78 194.50,809.78 195.65,809.78 196.80,797.31 197.95,809.78 199.10,797.31 200.25,809.78 201.40,809.78 202.55,797.31 202.70,813.51 203.70,809.78 204.85,809.78 206.00,797.31 207.15,809.78 208.30,797.31 209.45,809.78 210.60,797.31 211.75,809.78 212.90,797.31 214.05,809.78 215.20,809.78 216.35,797.31 217.50,809.78 218.65,797.31 219.80,809.78 220.95,809.78 222.10,809.78 222.90,635.30 223.25,809.78 224.40,809.78 225.55,809.78 226.70,809.78 227.85,809.78 229.00,797.31 230.15,809.78 231.30,797.31 232.45,809.78 233.60,797.31 234.75,809.78 235.90,797.31 237.05,809.78 237.50,772.39 238.20,797.31 239.35,809.78 240.50,809.78 241.65,797.31 242.60,772.39 242.80,809.78 243.95,797.31 245.10,809.78 246.25,797.31 247.40,809.78 248.55,797.31 249.70,809.78 250.85,797.31 252.00,809.78 253.15,809.78 254.30,809.78 255.45,809.78 256.40,784.85 256.60,809.78 257.75,809.78 258.90,809.78 260.05,809.78 261.10,735.00 261.20,809.78 262.35,809.78 263.50,797.31 264.65,809.78 265.80,797.31 266.95,809.78 267.60,710.08 268.10,797.31 269.25,809.78 270.40,809.78 271.55,809.78 272.70,797.31 273.85,809.78 275.00,809.78 275.40,722.54 276.15,797.31 277.30,809.78 278.45,797.31 279.60,809.78 280.75,809.78 281.90,797.31 282.50,784.85 283.05,809.78 283.90,722.54 284.20,797.31 285.35,809.78 286.50,797.31 287.65,809.78 288.80,809.78 289.20,722.54 289.95,809.78 291.10,797.31 292.25,809.78 293.40,809.78 294.55,797.31 295.70,809.78 296.85,809.78 298.00,797.31 299.15,809.78 299.60,834.70 300.30,809.78 301.45,809.78 302.60,809.78 303.75,809.78 304.90,797.31 306.05,809.78 306.30,784.85 307.20,797.31 308.35,809.78 309.50,809.78 310.65,809.78 311.80,797.31 312.95,809.78 313.90,710.08 314.10,809.78 315.25,797.31 316.40,809.78 317.55,809.78 318.60,784.85 318.70,809.78 319.85,809.78 321.00,809.78 322.15,797.31 323.30,809.78 324.45,797.31 325.60,809.78 326.75,809.78 327.90,797.31 329.05,809.78 329.60,772.39 330.20,797.31 331.35,809.78 332.50,797.31 332.90,784.85 333.65,809.78 334.80,797.31 335.95,809.78 337.10,809.78 338.25,797.31 339.40,809.78 340.55,809.78 341.70,797.31 342.85,809.78 343.80,784.85 344.00,797.31 345.15,809.78 346.30,797.31 347.45,809.78 348.60,809.78 349.75,797.31 350.90,809.78 352.05,797.31 352.60,784.85 353.20,809.78 354.35,797.31 355.50,809.78 356.65,809.78 357.80,809.78 358.95,809.78 359.80,834.70 359.8,834.7" fill="#9d32d0" fill-opacity="0.18"/>
<polyline points="113.80,784.85 113.60,784.85 114.00,809.78 114.75,735.00 115.15,797.31 116.30,809.78 117.45,797.31 118.60,809.78 119.75,809.78 120.90,797.31 122.05,809.78 123.20,809.78 124.35,809.78 125.50,809.78 126.65,809.78 127.80,809.78 128.95,809.78 130.10,809.78 131.25,809.78 132.40,809.78 133.55,809.78 134.70,809.78 135.85,809.78 137.00,797.31 138.15,809.78 139.30,797.31 140.45,809.78 141.60,809.78 142.75,809.78 143.90,809.78 145.05,797.31 146.20,809.78 147.35,809.78 148.50,809.78 149.65,809.78 150.80,809.78 151.95,809.78 152.30,747.46 153.10,809.78 154.25,809.78 155.40,809.78 156.55,809.78 157.50,660.22 157.70,809.78 158.85,809.78 160.00,809.78 161.15,809.78 162.30,809.78 162.80,710.08 163.45,809.78 164.60,809.78 165.75,797.31 166.90,809.78 168.05,797.31 169.20,809.78 170.35,797.31 170.60,784.85 171.50,809.78 172.65,809.78 173.80,809.78 174.95,809.78 176.10,797.31 177.25,809.78 177.30,784.85 178.40,797.31 179.55,809.78 180.70,809.78 181.85,809.78 183.00,809.78 183.20,697.61 184.15,809.78 185.30,809.78 186.45,797.31 187.60,809.78 188.75,809.78 189.90,797.31 191.05,809.78 191.30,697.61 192.20,797.31 193.35,809.78 194.50,809.78 195.65,809.78 196.80,797.31 197.95,809.78 199.10,797.31 200.25,809.78 201.40,809.78 202.55,797.31 202.70,813.51 203.70,809.78 204.85,809.78 206.00,797.31 207.15,809.78 208.30,797.31 209.45,809.78 210.60,797.31 211.75,809.78 212.90,797.31 214.05,809.78 215.20,809.78 216.35,797.31 217.50,809.78 218.65,797.31 219.80,809.78 220.95,809.78 222.10,809.78 222.90,635.30 223.25,809.78 224.40,809.78 225.55,809.78 226.70,809.78 227.85,809.78 229.00,797.31 230.15,809.78 231.30,797.31 232.45,809.78 233.60,797.31 234.75,809.78 235.90,797.31 237.05,809.78 237.50,772.39 238.20,797.31 239.35,809.78 240.50,809.78 241.65,797.31 242.60,772.39 242.80,809.78 243.95,797.31 245.10,809.78 246.25,797.31 247.40,809.78 248.55,797.31 249.70,809.78 250.85,797.31 252.00,809.78 253.15,809.78 254.30,809.78 255.45,809.78 256.40,784.85 256.60,809.78 257.75,809.78 258.90,809.78 260.05,809.78 261.10,735.00 261.20,809.78 262.35,809.78 263.50,797.31 264.65,809.78 265.80,797.31 266.95,809.78 267.60,710.08 268.10,797.31 269.25,809.78 270.40,809.78 271.55,809.78 272.70,797.31 273.85,809.78 275.00,809.78 275.40,722.54 276.15,797.31 277.30,809.78 278.45,797.31 279.60,809.78 280.75,809.78 281.90,797.31 282.50,784.85 283.05,809.78 283.90,722.54 284.20,797.31 285.35,809.78 286.50,797.31 287.65,809.78 288.80,809.78 289.20,722.54 289.95,809.78 291.10,797.31 292.25,809.78 293.40,809.78 294.55,797.31 295.70,809.78 296.85,809.78 298.00,797.31 299.15,809.78 299.60,834.70 300.30,809.78 301.45,809.78 302.60,809.78 303.75,809.78 304.90,797.31 306.05,809.78 306.30,784.85 307.20,797.31 308.35,809.78 309.50,809.78 310.65,809.78 311.80,797.31 312.95,809.78 313.90,710.08 314.10,809.78 315.25,797.31 316.40,809.78 317.55,809.78 318.60,784.85 318.70,809.78 319.85,809.78 321.00,809.78 322.15,797.31 323.30,809.78 324.45,797.31 325.60,809.78 326.75,809.78 327.90,797.31 329.05,809.78 329.60,772.39 330.20,797.31 331.35,809.78 332.50,797.31 332.90,784.85 333.65,809.78 334.80,797.31 335.95,809.78 337.10,809.78 338.25,797.31 339.40,809.78 340.55,809.78 341.70,797.31 342.85,809.78 343.80,784.85 344.00,797.31 345.15,809.78 346.30,797.31 347.45,809.78 348.60,809.78 349.75,797.31 350.90,809.78 352.05,797.31 352.60,784.85 353.20,809.78 354.35,797.31 355.50,809.78 356.65,809.78 357.80,809.78 358.95,809.78 359.80,834.70" fill="none" stroke="#9d32d0" stroke-width="1.1" stroke-linejoin="miter"/>
<rect x="442" y="635.00" width="7" height="1.2" fill="#5c5c5c"/>
<rect x="449.8" y="635.00" width="539.5" height="1.2" fill="#5c5c5c"/>
<text x="438.5" y="639.5" font-size="11.3" fill="#8e8e8e" text-anchor="end" font-weight="normal" >100%</text>
<rect x="442" y="694.10" width="7" height="1.2" fill="#5c5c5c"/>
<rect x="449.8" y="694.10" width="539.5" height="1.2" fill="#5c5c5c"/>
<text x="438.5" y="698.6" font-size="11.3" fill="#8e8e8e" text-anchor="end" font-weight="normal" >0%</text>
<rect x="470.00" y="635.50" width="1.2" height="66.60" fill="#5c5c5c"/>
<rect x="605.35" y="635.50" width="1.2" height="66.60" fill="#5c5c5c"/>
<rect x="740.70" y="635.50" width="1.2" height="66.60" fill="#5c5c5c"/>
<rect x="876.05" y="635.50" width="1.2" height="66.60" fill="#5c5c5c"/>
<rect x="442" y="712.90" width="7" height="1.2" fill="#5c5c5c"/>
<rect x="449.8" y="712.90" width="539.5" height="1.2" fill="#5c5c5c"/>
<text x="438.5" y="717.4" font-size="11.3" fill="#8e8e8e" text-anchor="end" font-weight="normal" >100%</text>
<rect x="442" y="771.90" width="7" height="1.2" fill="#5c5c5c"/>
<rect x="449.8" y="771.90" width="539.5" height="1.2" fill="#5c5c5c"/>
<text x="438.5" y="776.4" font-size="11.3" fill="#8e8e8e" text-anchor="end" font-weight="normal" >0%</text>
<rect x="470.00" y="713.40" width="1.2" height="66.50" fill="#5c5c5c"/>
<rect x="605.35" y="713.40" width="1.2" height="66.50" fill="#5c5c5c"/>
<rect x="740.70" y="713.40" width="1.2" height="66.50" fill="#5c5c5c"/>
<rect x="876.05" y="713.40" width="1.2" height="66.50" fill="#5c5c5c"/>
<rect x="442" y="790.00" width="7" height="1.2" fill="#5c5c5c"/>
<rect x="449.8" y="790.00" width="539.5" height="1.2" fill="#5c5c5c"/>
<text x="438.5" y="794.5" font-size="11.3" fill="#8e8e8e" text-anchor="end" font-weight="normal" >100%</text>
<rect x="442" y="849.30" width="7" height="1.2" fill="#5c5c5c"/>
<rect x="449.8" y="849.30" width="539.5" height="1.2" fill="#5c5c5c"/>
<text x="438.5" y="853.8" font-size="11.3" fill="#8e8e8e" text-anchor="end" font-weight="normal" >0%</text>
<rect x="470.00" y="790.50" width="1.2" height="66.80" fill="#5c5c5c"/>
<rect x="605.35" y="790.50" width="1.2" height="66.80" fill="#5c5c5c"/>
<rect x="740.70" y="790.50" width="1.2" height="66.80" fill="#5c5c5c"/>
<rect x="876.05" y="790.50" width="1.2" height="66.80" fill="#5c5c5c"/>
<text transform="translate(407.5,665.5) rotate(12)" font-size="13" font-weight="bold" fill="#ffffff">CPU</text>
<text transform="translate(407.5,742.5) rotate(12)" font-size="13" font-weight="bold" fill="#ffffff">RAM</text>
<text transform="translate(407.5,819.5) rotate(12)" font-size="13" font-weight="bold" fill="#ffffff">DISK</text>
<polygon points="449.5,694.6 449.5,691.87 451.1,691.71 452.7,691.80 454.3,691.68 455.9,691.67 457.5,691.96 459.1,691.99 460.7,691.55 462.3,691.86 463.9,691.87 465.5,691.47 467.1,691.71 468.0,691.64 468.7,691.55 470.3,691.75 471.9,691.66 473.5,691.92 475.1,691.66 476.7,691.54 478.3,691.72 479.9,691.61 481.5,691.64 483.1,691.97 484.7,691.60 486.3,691.69 487.9,691.84 489.5,691.98 491.1,691.54 492.7,691.75 494.3,691.62 495.9,691.53 497.5,691.62 499.1,690.25 500.5,688.10 500.7,688.41 502.3,690.86 503.9,691.76 505.5,691.50 507.1,691.53 508.7,691.95 510.3,691.93 511.9,691.88 513.5,691.49 515.1,691.77 516.7,691.67 518.3,691.84 519.9,691.73 521.5,691.79 523.1,691.81 524.7,691.69 526.3,691.69 527.9,691.52 529.5,691.64 531.1,691.51 532.7,691.54 534.3,691.47 535.9,691.64 537.5,691.91 539.1,691.54 540.7,691.23 542.0,690.46 542.3,690.64 543.9,691.59 545.5,691.62 547.1,691.89 548.7,691.56 550.3,691.69 551.9,691.85 553.5,691.97 555.1,691.55 556.7,691.47 558.3,691.95 559.9,691.57 561.5,691.78 563.1,691.92 564.7,691.84 566.3,691.59 567.9,691.54 569.5,691.98 571.1,691.67 572.7,691.98 574.3,691.62 575.9,691.82 577.5,691.53 579.1,691.48 580.7,691.73 582.3,691.47 583.9,691.83 585.5,691.96 587.1,691.68 588.7,691.98 590.3,691.89 591.9,691.78 593.5,691.67 595.1,691.92 596.7,691.98 598.3,691.54 599.9,691.83 601.5,691.49 603.1,691.52 604.7,691.80 606.3,691.75 607.9,691.72 609.5,691.66 611.1,691.34 612.7,688.11 613.0,687.51 614.3,690.13 615.9,691.50 617.5,689.87 617.5,689.87 619.1,691.71 620.7,690.71 621.0,690.46 622.3,691.53 623.9,691.76 625.5,691.45 626.0,691.35 627.1,691.57 628.7,691.71 630.3,691.99 631.9,691.78 633.5,691.69 635.1,691.99 636.7,691.67 638.3,691.66 639.9,691.97 641.5,691.67 643.1,691.75 644.7,691.64 646.3,691.81 647.9,691.62 649.5,691.61 651.1,691.99 652.7,691.97 654.3,690.46 655.5,688.69 655.9,689.28 657.5,691.65 659.1,691.76 660.7,691.68 662.3,691.83 663.9,691.81 665.5,691.83 667.1,691.80 668.7,691.68 670.3,691.81 671.9,691.65 672.0,691.64 673.5,691.59 675.1,691.99 676.7,691.70 678.3,691.61 679.9,691.83 681.5,691.88 683.1,691.57 684.7,691.87 686.3,691.90 687.9,691.29 689.5,690.34 690.3,689.87 691.1,690.34 692.7,691.29 694.3,691.82 695.9,691.56 697.5,691.77 699.1,691.54 700.7,691.91 702.3,691.82 703.9,691.65 705.5,691.53 707.1,690.77 708.5,689.28 708.7,689.49 710.3,691.20 711.9,691.72 713.5,691.90 715.1,691.57 716.7,691.55 718.3,691.90 719.9,691.85 721.5,691.57 723.1,691.66 724.7,691.57 726.3,691.82 727.9,691.93 729.5,691.84 731.1,691.58 732.7,691.86 734.3,691.82 735.9,691.78 737.5,691.78 739.1,691.78 740.7,691.51 742.3,691.92 743.9,692.00 745.5,691.50 747.1,691.53 748.7,691.47 750.3,691.77 751.9,691.49 753.5,691.51 755.1,691.88 756.7,691.60 758.3,691.55 759.9,691.09 760.0,691.05 761.5,691.59 763.1,691.85 764.7,691.82 766.3,691.88 767.9,691.96 769.5,691.69 771.1,691.85 772.7,691.57 774.3,691.98 775.9,691.52 777.5,691.63 779.1,691.51 780.7,691.52 782.3,691.52 783.9,691.69 785.5,691.99 787.1,691.60 788.7,691.91 790.3,691.84 791.9,691.65 793.5,691.72 795.1,691.78 796.7,691.50 798.3,691.67 799.9,691.65 800.0,691.64 801.5,691.79 803.1,691.54 804.7,691.75 806.3,691.58 807.9,691.81 809.5,691.89 811.1,691.72 812.7,691.57 814.3,691.91 815.9,691.58 817.5,691.51 819.1,691.57 820.7,691.56 822.3,692.00 823.9,691.67 825.5,691.54 827.1,691.97 828.7,691.86 830.3,691.86 831.9,691.72 833.5,691.77 835.0,691.64 835.1,691.66 836.7,691.59 838.3,692.00 839.9,691.97 841.5,691.93 843.1,691.93 844.7,691.96 846.3,691.48 847.9,691.55 849.5,691.95 851.1,691.73 852.7,691.83 853.8,691.76 853.8,694.6" fill="#d03a2a" fill-opacity="0.22"/>
<polyline points="449.5,691.87 451.1,691.71 452.7,691.80 454.3,691.68 455.9,691.67 457.5,691.96 459.1,691.99 460.7,691.55 462.3,691.86 463.9,691.87 465.5,691.47 467.1,691.71 468.0,691.64 468.7,691.55 470.3,691.75 471.9,691.66 473.5,691.92 475.1,691.66 476.7,691.54 478.3,691.72 479.9,691.61 481.5,691.64 483.1,691.97 484.7,691.60 486.3,691.69 487.9,691.84 489.5,691.98 491.1,691.54 492.7,691.75 494.3,691.62 495.9,691.53 497.5,691.62 499.1,690.25 500.5,688.10 500.7,688.41 502.3,690.86 503.9,691.76 505.5,691.50 507.1,691.53 508.7,691.95 510.3,691.93 511.9,691.88 513.5,691.49 515.1,691.77 516.7,691.67 518.3,691.84 519.9,691.73 521.5,691.79 523.1,691.81 524.7,691.69 526.3,691.69 527.9,691.52 529.5,691.64 531.1,691.51 532.7,691.54 534.3,691.47 535.9,691.64 537.5,691.91 539.1,691.54 540.7,691.23 542.0,690.46 542.3,690.64 543.9,691.59 545.5,691.62 547.1,691.89 548.7,691.56 550.3,691.69 551.9,691.85 553.5,691.97 555.1,691.55 556.7,691.47 558.3,691.95 559.9,691.57 561.5,691.78 563.1,691.92 564.7,691.84 566.3,691.59 567.9,691.54 569.5,691.98 571.1,691.67 572.7,691.98 574.3,691.62 575.9,691.82 577.5,691.53 579.1,691.48 580.7,691.73 582.3,691.47 583.9,691.83 585.5,691.96 587.1,691.68 588.7,691.98 590.3,691.89 591.9,691.78 593.5,691.67 595.1,691.92 596.7,691.98 598.3,691.54 599.9,691.83 601.5,691.49 603.1,691.52 604.7,691.80 606.3,691.75 607.9,691.72 609.5,691.66 611.1,691.34 612.7,688.11 613.0,687.51 614.3,690.13 615.9,691.50 617.5,689.87 617.5,689.87 619.1,691.71 620.7,690.71 621.0,690.46 622.3,691.53 623.9,691.76 625.5,691.45 626.0,691.35 627.1,691.57 628.7,691.71 630.3,691.99 631.9,691.78 633.5,691.69 635.1,691.99 636.7,691.67 638.3,691.66 639.9,691.97 641.5,691.67 643.1,691.75 644.7,691.64 646.3,691.81 647.9,691.62 649.5,691.61 651.1,691.99 652.7,691.97 654.3,690.46 655.5,688.69 655.9,689.28 657.5,691.65 659.1,691.76 660.7,691.68 662.3,691.83 663.9,691.81 665.5,691.83 667.1,691.80 668.7,691.68 670.3,691.81 671.9,691.65 672.0,691.64 673.5,691.59 675.1,691.99 676.7,691.70 678.3,691.61 679.9,691.83 681.5,691.88 683.1,691.57 684.7,691.87 686.3,691.90 687.9,691.29 689.5,690.34 690.3,689.87 691.1,690.34 692.7,691.29 694.3,691.82 695.9,691.56 697.5,691.77 699.1,691.54 700.7,691.91 702.3,691.82 703.9,691.65 705.5,691.53 707.1,690.77 708.5,689.28 708.7,689.49 710.3,691.20 711.9,691.72 713.5,691.90 715.1,691.57 716.7,691.55 718.3,691.90 719.9,691.85 721.5,691.57 723.1,691.66 724.7,691.57 726.3,691.82 727.9,691.93 729.5,691.84 731.1,691.58 732.7,691.86 734.3,691.82 735.9,691.78 737.5,691.78 739.1,691.78 740.7,691.51 742.3,691.92 743.9,692.00 745.5,691.50 747.1,691.53 748.7,691.47 750.3,691.77 751.9,691.49 753.5,691.51 755.1,691.88 756.7,691.60 758.3,691.55 759.9,691.09 760.0,691.05 761.5,691.59 763.1,691.85 764.7,691.82 766.3,691.88 767.9,691.96 769.5,691.69 771.1,691.85 772.7,691.57 774.3,691.98 775.9,691.52 777.5,691.63 779.1,691.51 780.7,691.52 782.3,691.52 783.9,691.69 785.5,691.99 787.1,691.60 788.7,691.91 790.3,691.84 791.9,691.65 793.5,691.72 795.1,691.78 796.7,691.50 798.3,691.67 799.9,691.65 800.0,691.64 801.5,691.79 803.1,691.54 804.7,691.75 806.3,691.58 807.9,691.81 809.5,691.89 811.1,691.72 812.7,691.57 814.3,691.91 815.9,691.58 817.5,691.51 819.1,691.57 820.7,691.56 822.3,692.00 823.9,691.67 825.5,691.54 827.1,691.97 828.7,691.86 830.3,691.86 831.9,691.72 833.5,691.77 835.0,691.64 835.1,691.66 836.7,691.59 838.3,692.00 839.9,691.97 841.5,691.93 843.1,691.93 844.7,691.96 846.3,691.48 847.9,691.55 849.5,691.95 851.1,691.73 852.7,691.83 853.8,691.76" fill="none" stroke="#d23c2a" stroke-width="1.25" stroke-linejoin="round"/>
<polygon points="859.2,694.6 859.2,691.88 860.7,691.83 862.3,691.81 863.9,691.66 865.5,691.69 867.1,691.81 868.7,691.90 870.3,691.82 871.9,691.93 873.5,691.70 875.1,691.62 876.7,691.80 878.3,691.96 879.9,691.90 881.5,691.80 883.1,691.68 884.7,691.58 886.3,691.80 887.9,691.57 889.5,691.67 891.1,691.77 892.7,691.80 894.3,691.74 895.9,691.63 897.5,691.78 899.1,691.63 900.7,691.75 902.3,691.87 903.9,691.71 905.5,691.63 907.1,691.96 908.7,691.77 910.3,691.77 911.9,691.53 913.5,691.50 915.1,691.80 916.7,691.52 918.3,691.58 919.9,691.86 921.5,691.75 923.1,691.93 924.7,691.57 926.3,691.65 927.9,691.53 929.5,691.58 931.1,691.64 932.7,691.61 934.3,691.70 935.9,691.94 937.5,691.69 939.1,692.00 940.7,691.92 942.3,691.59 943.9,691.98 945.5,691.95 947.1,691.95 948.7,691.53 950.3,691.90 951.9,691.99 953.5,691.55 955.1,691.94 956.7,691.55 958.3,691.64 959.9,691.55 961.5,691.49 963.1,691.69 964.7,691.57 966.3,691.98 967.9,691.59 969.5,691.73 971.1,691.62 972.7,691.94 974.3,691.60 975.9,691.50 977.5,691.97 979.1,691.83 980.7,691.70 982.3,691.56 983.9,691.87 985.5,691.90 987.1,691.87 987.1,694.6" fill="#d03a2a" fill-opacity="0.22"/>
<polyline points="859.2,691.88 860.7,691.83 862.3,691.81 863.9,691.66 865.5,691.69 867.1,691.81 868.7,691.90 870.3,691.82 871.9,691.93 873.5,691.70 875.1,691.62 876.7,691.80 878.3,691.96 879.9,691.90 881.5,691.80 883.1,691.68 884.7,691.58 886.3,691.80 887.9,691.57 889.5,691.67 891.1,691.77 892.7,691.80 894.3,691.74 895.9,691.63 897.5,691.78 899.1,691.63 900.7,691.75 902.3,691.87 903.9,691.71 905.5,691.63 907.1,691.96 908.7,691.77 910.3,691.77 911.9,691.53 913.5,691.50 915.1,691.80 916.7,691.52 918.3,691.58 919.9,691.86 921.5,691.75 923.1,691.93 924.7,691.57 926.3,691.65 927.9,691.53 929.5,691.58 931.1,691.64 932.7,691.61 934.3,691.70 935.9,691.94 937.5,691.69 939.1,692.00 940.7,691.92 942.3,691.59 943.9,691.98 945.5,691.95 947.1,691.95 948.7,691.53 950.3,691.90 951.9,691.99 953.5,691.55 955.1,691.94 956.7,691.55 958.3,691.64 959.9,691.55 961.5,691.49 963.1,691.69 964.7,691.57 966.3,691.98 967.9,691.59 969.5,691.73 971.1,691.62 972.7,691.94 974.3,691.60 975.9,691.50 977.5,691.97 979.1,691.83 980.7,691.70 982.3,691.56 983.9,691.87 985.5,691.90 987.1,691.87" fill="none" stroke="#d23c2a" stroke-width="1.25" stroke-linejoin="round"/>
<rect x="449.5" y="768.6" width="404.5" height="3.8" fill="#1414d0" fill-opacity="0.28"/>
<rect x="449.5" y="767.7" width="404.5" height="1.5" fill="#1212d6"/>
<rect x="859" y="768.6" width="128.79999999999995" height="3.8" fill="#1414d0" fill-opacity="0.28"/>
<rect x="859" y="767.7" width="128.79999999999995" height="1.5" fill="#1212d6"/>
<rect x="449.8" y="771.9" width="539.5" height="1.1" fill="#7e7e8c"/>
<rect x="470.10" y="767.5" width="1" height="5" fill="#9a9a9a" opacity="0.45"/>
<rect x="605.45" y="767.5" width="1" height="5" fill="#9a9a9a" opacity="0.45"/>
<rect x="740.80" y="767.5" width="1" height="5" fill="#9a9a9a" opacity="0.45"/>
<rect x="876.15" y="767.5" width="1" height="5" fill="#9a9a9a" opacity="0.45"/>
<rect x="449.5" y="799.6" width="404.5" height="50.2" fill="#27421f"/>
<rect x="449.5" y="798.8" width="404.5" height="1.6" fill="#6cc644"/>
<rect x="859" y="799.6" width="128.79999999999995" height="50.2" fill="#27421f"/>
<rect x="859" y="798.8" width="128.79999999999995" height="1.6" fill="#6cc644"/>
<rect x="470.10" y="799" width="1" height="51" fill="#7a8a70" opacity="0.55"/>
<rect x="605.45" y="799" width="1" height="51" fill="#7a8a70" opacity="0.55"/>
<rect x="740.80" y="799" width="1" height="51" fill="#7a8a70" opacity="0.55"/>
<rect x="876.15" y="799" width="1" height="51" fill="#7a8a70" opacity="0.55"/>
<defs><clipPath id="mapclip"><rect x="718" y="322" width="272" height="234"/></clipPath><filter id="blur2" x="-50%" y="-50%" width="200%" height="200%"><feGaussianBlur stdDeviation="2.2"/></filter><filter id="glow" x="-20%" y="-50%" width="140%" height="200%"><feGaussianBlur stdDeviation="1.5"/></filter><linearGradient id="pin" x1="0" y1="0" x2="0" y2="1"><stop offset="0" stop-color="#5a9ee0"/><stop offset="1" stop-color="#2d6fc0"/></linearGradient></defs>
<g clip-path="url(#mapclip)">
<rect x="718" y="322" width="272" height="234" fill="#b0d2dd"/>
<polygon points="716.0,381.1 720.5,376.6 727.3,373.2 738.6,373.2 753.4,373.2 761.3,378.9 765.8,383.4 756.8,390.2 754.5,398.1 759.0,404.9 769.2,407.2 776.0,406.0 777.7,399.2 776.0,392.5 779.4,390.2 789.6,392.5 795.2,398.1 798.6,407.2 806.0,414.0 809.0,425.3 800.8,426.6 792.6,423.9 789.8,429.4 787.1,437.6 778.0,440.6 771.7,451.7 770.3,454.5 773.1,460.8 768.9,455.9 762.0,456.6 752.2,458.0 750.1,464.3 753.6,469.8 759.2,471.9 763.4,468.4 762.0,475.4 768.9,482.4 775.9,485.8 775.2,487.9 768.9,485.1 762.0,479.6 752.2,476.1 741.1,470.5 736.9,463.6 729.9,454.5 724.4,450.3 716.0,446.1" fill="#f2efe9" />
<polygon points="718.3,333.6 722.8,330.2 729.6,326.8 738.6,322.3 779.4,322.3 776.0,330.2 770.3,334.7 773.7,344.9 755.6,346.6 728.5,346.3 718.3,342.6" fill="#f2efe9" />
<polygon points="716.0,349.7 722.8,347.6 733.0,350.8 740.9,348.5 753.4,349.7 753.9,357.4 751.7,369.8 738.6,371.2 727.3,372.3 716.0,367.8" fill="#f2efe9" />
<polygon points="760.2,348.3 770.3,347.2 780.5,352.8 787.3,365.3 798.6,376.6 795.2,384.5 786.2,386.8 778.3,381.1 771.5,376.6 768.1,369.8 762.4,363.0 759.0,355.1" fill="#f2efe9" />
<polygon points="764.7,374.3 772.6,376.6 774.9,386.8 769.2,387.9 765.8,383.4" fill="#f2efe9" />
<path d="M727.3 332.5 L738.6 337.0 L750.0 333.6" stroke="#b0d2dd" stroke-width="1.5" fill="none"/>
<path d="M752.2 326.8 L753.4 342.6" stroke="#b0d2dd" stroke-width="1.5" fill="none"/>
<path d="M738.6 326.8 L747.7 332.5" stroke="#b0d2dd" stroke-width="1.5" fill="none"/>
<path d="M761.3 333.6 L769.2 331.3" stroke="#b0d2dd" stroke-width="1.5" fill="none"/>
<path d="M725.1 354.0 L738.6 359.6 L747.7 357.4" stroke="#b0d2dd" stroke-width="1.5" fill="none"/>
<path d="M733.0 364.2 L744.3 367.5" stroke="#b0d2dd" stroke-width="1.5" fill="none"/>
<path d="M720.5 340.4 L729.6 338.1" stroke="#b0d2dd" stroke-width="1.5" fill="none"/>
<path d="M763.5 354.0 L772.6 363.0" stroke="#b0d2dd" stroke-width="1.5" fill="none"/>
<path d="M783.9 367.5 L779.4 373.2" stroke="#b0d2dd" stroke-width="1.5" fill="none"/>
<polygon points="783.0,324.1 852.7,322.1 856.0,322.1 854.2,322.1 854.9,347.7 851.4,351.9 851.4,354.2 847.3,365.1 839.1,373.3 828.1,380.2 824.0,391.1 819.9,397.2 814.4,389.7 810.3,378.8 809.0,365.1 804.9,351.4 798.0,339.1 785.7,332.3" fill="#f2efe9" />
<polygon points="847.3,380.2 856.0,377.4 858.3,378.2 860.4,383.8 854.2,388.0 851.4,387.7 847.3,384.3" fill="#f2efe9" />
<polygon points="894.4,322.1 908.2,322.8 909.6,329.7 901.3,333.9 897.2,328.3" fill="#f2efe9" />
<polygon points="947.1,358.8 955.4,343.6 967.9,333.2 969.3,336.6 958.2,349.1 952.6,361.6" fill="#f2efe9" />
<polygon points="885.5,393.7 886.5,388.6 893.6,380.5 900.8,371.3 905.9,367.2 913.0,362.6 919.1,365.2 926.3,370.3 932.4,374.4 931.3,378.4 926.3,380.5 927.3,384.6 933.4,379.5 938.5,373.3 946.6,368.3 958.2,365.8 965.1,369.9 969.3,361.6 970.6,353.3 974.8,360.2 979.0,365.8 980.4,357.4 985.9,351.9 990.1,349.8 990.1,440.0 990.7,435.0 990.7,471.9 985.2,475.4 981.0,485.2 975.4,475.4 969.8,467.1 961.5,460.1 955.9,461.5 957.3,467.1 950.3,472.6 939.2,479.6 946.2,481.0 939.2,490.7 932.2,496.3 930.8,513.0 922.5,524.2 919.7,532.5 911.3,540.9 903.0,540.9 896.0,524.2 894.6,507.5 890.4,493.5 877.9,489.3 866.7,488.0 858.4,479.6 857.0,467.1 863.9,455.9 868.1,448.9 866.7,443.4 867.1,445.0 867.1,433.5 881.4,434.0 884.5,429.4 875.3,426.3 873.3,423.3 882.4,420.2 885.5,415.1 890.6,411.1 889.6,403.9 892.6,402.9 894.7,408.0 898.7,410.0 895.7,402.9 890.6,398.8 886.5,399.8" fill="#f2efe9" />
<polygon points="901.8,394.8 906.9,381.5 911.0,380.5 908.9,387.6 904.8,397.8 911.0,397.8 917.1,396.8 915.0,399.8 908.9,402.9 911.0,408.0 905.9,410.5 898.7,410.0 894.7,406.0 897.7,398.8" fill="#b0d2dd" />
<polygon points="915.5,433.5 923.2,428.4 931.3,432.5 935.4,436.5 929.3,439.6 917.1,438.6" fill="#b0d2dd" />
<polygon points="941.5,426.3 946.6,425.3 950.0,430.4 950.7,445.0 951.0,443.4 946.2,443.4 944.8,435.0" fill="#b0d2dd" />
<polygon points="868.1,443.4 879.3,442.7 884.8,437.8 890.4,435.0 884.5,436.5 890.6,433.5 894.7,430.4 900.8,435.5 906.9,440.6 911.0,445.0 912.7,442.0 914.1,444.8 925.3,444.1 928.0,444.8 925.9,453.1 911.3,451.0 903.0,453.1 891.8,450.3 891.8,445.5 877.9,444.8" fill="#b0d2dd" />
<polygon points="923.2,455.9 925.9,454.5 937.1,476.8 939.2,479.9 934.3,479.6" fill="#b0d2dd" />
<polygon points="944.8,454.5 947.5,454.5 954.5,462.9 950.3,463.6" fill="#b0d2dd" />
<polygon points="871.2,400.9 874.3,401.9 876.3,408.0 880.4,415.1 879.4,419.2 873.3,420.2 875.3,414.1 872.2,410.0" fill="#f2efe9" />
<polygon points="865.1,412.1 870.2,410.0 870.2,416.2 866.1,417.2" fill="#f2efe9" />
<polygon points="936.4,518.6 944.8,513.0 943.4,524.2 937.8,531.2 935.7,525.6" fill="#f2efe9" />
<polygon points="724.1,450.0 727.1,451.4 731.3,457.3 735.1,463.8 733.8,464.7 729.2,458.7 724.6,452.4" fill="#f2efe9" />
<polygon points="767.5,465.6 774.5,466.3 780.1,469.1 778.7,470.1 771.7,467.9 767.5,466.8" fill="#f2efe9" />
<polygon points="781.5,470.5 788.4,471.5 787.0,472.6 781.5,472.1" fill="#f2efe9" />
<polygon points="983.1,486.6 985.2,485.9 985.9,488.7 983.8,489.3" fill="#f2efe9" />
<polygon points="773.1,486.5 782.9,481.0 794.0,485.1 810.7,490.7 813.5,496.3 832.3,504.6 827.4,521.4 816.3,532.5 806.5,542.3 801.0,546.4 794.0,555.5 781.5,555.5 784.3,532.5 777.3,513.0 771.7,503.3 774.5,494.9" fill="#f2efe9" />
<polyline points="718.1,451.0 736.9,452.4 743.9,455.9 749.4,459.4" fill="none" stroke="#cdb0cc" stroke-width="0.55"/>
<polyline points="716.0,421.9 755.6,421.9" fill="none" stroke="#cdb0cc" stroke-width="0.55"/>
<polyline points="782.9,481.0 785.6,487.9 791.2,490.7 799.6,486.5 801.0,493.5" fill="none" stroke="#cdb0cc" stroke-width="0.55"/>
<polyline points="781.5,499.1 782.9,506.0 788.4,510.2 799.6,513.0 805.1,529.7 807.9,532.5" fill="none" stroke="#cdb0cc" stroke-width="0.55"/>
<polyline points="777.3,494.9 781.5,499.1" fill="none" stroke="#cdb0cc" stroke-width="0.55"/>
<polyline points="788.4,510.2 789.8,524.1 796.8,525.5" fill="none" stroke="#cdb0cc" stroke-width="0.55"/>
<polyline points="788.4,524.1 785.6,540.9 782.9,554.8" fill="none" stroke="#cdb0cc" stroke-width="0.55"/>
<polyline points="799.6,487.9 805.1,493.5 810.7,490.7" fill="none" stroke="#cdb0cc" stroke-width="0.55"/>
<polyline points="773.1,496.3 778.7,497.7" fill="none" stroke="#cdb0cc" stroke-width="0.55"/>
<polyline points="757.8,476.8 762.0,481.0" fill="none" stroke="#cdb0cc" stroke-width="0.55"/>
<polyline points="763.4,479.6 766.1,483.1" fill="none" stroke="#cdb0cc" stroke-width="0.55"/>
<polyline points="859.5,461.5 869.7,461.5 866.3,453.6" fill="none" stroke="#cdb0cc" stroke-width="0.55"/>
<polyline points="856.7,467.2 869.7,467.2 870.9,461.5 884.4,470.6 892.4,464.9 898.0,466.0" fill="none" stroke="#cdb0cc" stroke-width="0.55"/>
<polyline points="891.2,446.8 892.4,464.9" fill="none" stroke="#cdb0cc" stroke-width="0.55"/>
<polyline points="911.6,451.3 911.6,467.2" fill="none" stroke="#cdb0cc" stroke-width="0.55"/>
<polyline points="911.6,466.6 925.2,466.6" fill="none" stroke="#cdb0cc" stroke-width="0.55"/>
<polyline points="857.3,475.1 870.9,476.2 872.0,461.5" fill="none" stroke="#cdb0cc" stroke-width="0.55"/>
<polyline points="884.4,470.6 883.3,478.5 898.0,479.6 898.0,466.0" fill="none" stroke="#cdb0cc" stroke-width="0.55"/>
<polyline points="898.0,466.0 910.5,467.2 908.2,483.0" fill="none" stroke="#cdb0cc" stroke-width="0.55"/>
<polyline points="908.2,483.0 923.0,481.9" fill="none" stroke="#cdb0cc" stroke-width="0.55"/>
<polyline points="923.0,481.9 926.3,477.4 934.3,476.2" fill="none" stroke="#cdb0cc" stroke-width="0.55"/>
<polyline points="925.2,489.8 932.0,492.1 939.9,487.6" fill="none" stroke="#cdb0cc" stroke-width="0.55"/>
<polyline points="883.3,478.5 881.0,488.7" fill="none" stroke="#cdb0cc" stroke-width="0.55"/>
<polyline points="896.9,479.6 892.4,492.1" fill="none" stroke="#cdb0cc" stroke-width="0.55"/>
<polyline points="898.0,484.2 909.4,484.2 913.9,488.7 900.3,491.0" fill="none" stroke="#cdb0cc" stroke-width="0.55"/>
<polyline points="900.3,491.0 913.9,489.8 918.4,493.2 916.2,510.2 907.1,512.5 900.3,505.7" fill="none" stroke="#cdb0cc" stroke-width="0.55"/>
<polyline points="894.6,506.8 908.2,511.3 907.1,519.3 894.6,519.3" fill="none" stroke="#cdb0cc" stroke-width="0.55"/>
<polyline points="907.1,512.5 923.0,517.0 913.9,521.5 907.1,519.3" fill="none" stroke="#cdb0cc" stroke-width="0.55"/>
<polyline points="918.4,493.2 927.5,500.0 929.7,511.3 918.4,510.2" fill="none" stroke="#cdb0cc" stroke-width="0.55"/>
<polyline points="923.0,517.0 925.2,521.5" fill="none" stroke="#cdb0cc" stroke-width="0.55"/>
<polyline points="906.0,519.3 906.0,530.6 916.2,526.1" fill="none" stroke="#cdb0cc" stroke-width="0.55"/>
<polyline points="900.3,532.9 911.6,530.6 920.7,534.0" fill="none" stroke="#cdb0cc" stroke-width="0.55"/>
<polyline points="933.1,492.1 933.1,498.9" fill="none" stroke="#cdb0cc" stroke-width="0.55"/>
<polyline points="866.3,477.4 872.0,479.6 869.7,488.7" fill="none" stroke="#cdb0cc" stroke-width="0.55"/>
<polyline points="875.4,481.9 875.4,489.8" fill="none" stroke="#cdb0cc" stroke-width="0.55"/>
<polyline points="878.8,480.8 878.8,489.8" fill="none" stroke="#cdb0cc" stroke-width="0.55"/>
<polyline points="872.0,479.6 883.3,478.5" fill="none" stroke="#cdb0cc" stroke-width="0.55"/>
<polyline points="927.5,454.7 934.3,457.0 941.1,455.9" fill="none" stroke="#cdb0cc" stroke-width="0.55"/>
<polyline points="934.3,474.0 952.4,471.7" fill="none" stroke="#cdb0cc" stroke-width="0.55"/>
<polyline points="943.3,469.4 950.1,462.7" fill="none" stroke="#cdb0cc" stroke-width="0.55"/>
<polyline points="925.2,451.3 934.3,446.8 941.1,444.5 955.0,446.8" fill="none" stroke="#cdb0cc" stroke-width="0.55"/>
<polyline points="941.1,444.5 942.2,457.0" fill="none" stroke="#cdb0cc" stroke-width="0.55"/>
<polyline points="947.9,440.0 949.0,453.6 955.0,454.7" fill="none" stroke="#cdb0cc" stroke-width="0.55"/>
<ellipse cx="921.3" cy="498.2" rx="1.6" ry="1.3" fill="#b0d2dd"/>
<polyline points="895.7,383.5 898.7,375.4 905.9,368.3" fill="none" stroke="#cdb0cc" stroke-width="0.55"/>
<polyline points="909.9,367.2 909.9,380.5 907.9,388.6" fill="none" stroke="#cdb0cc" stroke-width="0.55"/>
<polyline points="917.1,365.2 918.1,375.4 919.1,388.6 916.1,396.8" fill="none" stroke="#cdb0cc" stroke-width="0.55"/>
<polyline points="915.0,398.8 917.1,406.0 921.2,412.1 930.3,421.3 927.3,426.3" fill="none" stroke="#cdb0cc" stroke-width="0.55"/>
<polyline points="940.5,418.2 946.6,416.2 950.0,418.2" fill="none" stroke="#cdb0cc" stroke-width="0.55"/>
<polyline points="941.5,420.2 940.5,428.4" fill="none" stroke="#cdb0cc" stroke-width="0.55"/>
<polyline points="885.5,415.1 887.5,420.2 887.5,426.3 893.6,428.4 896.7,425.3" fill="none" stroke="#cdb0cc" stroke-width="0.55"/>
<polyline points="896.7,412.1 897.7,420.2 904.8,421.3 909.9,418.2 908.9,410.0" fill="none" stroke="#cdb0cc" stroke-width="0.55"/>
<polyline points="904.8,421.3 902.8,426.3 908.9,428.4 917.1,425.3 921.2,412.1" fill="none" stroke="#cdb0cc" stroke-width="0.55"/>
<polyline points="908.9,428.4 911.0,434.5 917.1,433.5" fill="none" stroke="#cdb0cc" stroke-width="0.55"/>
<polyline points="900.8,426.3 901.8,432.5 906.9,436.5 908.9,432.5" fill="none" stroke="#cdb0cc" stroke-width="0.55"/>
<polyline points="890.6,425.3 895.7,420.2" fill="none" stroke="#cdb0cc" stroke-width="0.55"/>
<polyline points="887.5,426.3 893.6,430.4 900.8,426.3" fill="none" stroke="#cdb0cc" stroke-width="0.55"/>
<polyline points="881.4,434.0 884.5,436.5" fill="none" stroke="#cdb0cc" stroke-width="0.55"/>
<polyline points="870.2,435.5 871.2,445.0" fill="none" stroke="#cdb0cc" stroke-width="0.55"/>
<polygon points="769,448.5 781,434 790,425 795,426.5 788,438 773,449" fill="#000" opacity="0.32" filter="url(#blur2)"/>
<path d="M768.5 448.8 Q766.5 441 760.5 432.5 Q757.2 428 757.2 423.3 A11.3 11.3 0 0 1 779.8 423.3 Q779.8 428 776.5 432.5 Q770.5 441 768.5 448.8 Z" fill="url(#pin)" stroke="#2a65ad" stroke-width="0.6"/>
<circle cx="768.3" cy="423.5" r="4.1" fill="#ffffff"/>
<rect x="802" y="541" width="188" height="15" fill="#ffffff" opacity="0.78"/>
<text x="805.3" y="552.2" font-size="10.4" fill="#333" textLength="180" lengthAdjust="spacingAndGlyphs"><tspan fill="#0078a8">Leaflet</tspan> | © <tspan fill="#0078a8">OpenStreetMap</tspan> contributors</text>
</g></svg>
</body></html>
